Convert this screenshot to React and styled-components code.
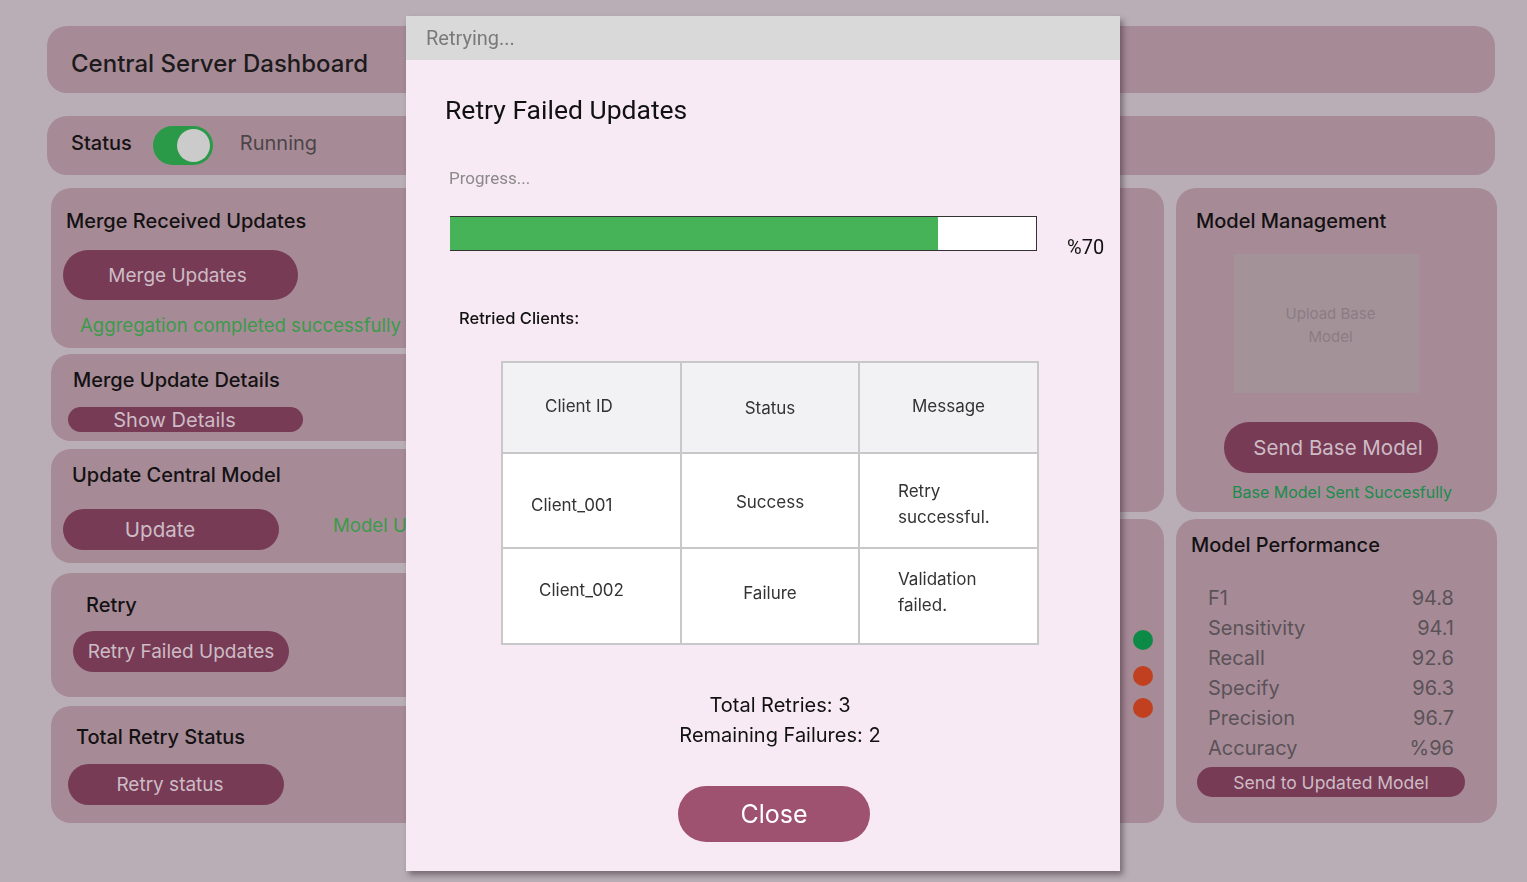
import React from "react";
import styled, { createGlobalStyle } from "styled-components";

const GlobalStyle = createGlobalStyle`
  html, body {
    margin: 0;
    padding: 0;
    background: #b9aeb6;
    font-family: Inter, "Noto Sans", sans-serif;
  }
`;

const Page = styled.div`
  width: 1527px;
  height: 882px;
  box-sizing: border-box;
  padding: 26px 32px 0 47px;
  display: flex;
  flex-direction: column;
  overflow: hidden;
`;

const TopBar = styled.div`
  height: ${(p) => p.h}px;
  margin-bottom: ${(p) => p.mb}px;
  box-sizing: border-box;
  padding: ${(p) => p.pad || "0"};
  padding-left: 24px;
  background: #a68b97;
  border-radius: 20px;
  display: flex;
  align-items: center;
  gap: 21px;
`;

const PageTitle = styled.h1`
  margin: 0;
  font-size: 24px;
  font-weight: 500;
  color: #1d1a1c;
`;

const Label = styled.span`
  font-size: 20px;
  font-weight: 500;
  color: #161315;
`;

const Toggle = styled.div`
  width: 60px;
  height: 39px;
  border-radius: 20px;
  background: #2b9a48;
  position: relative;
  &::after {
    content: "";
    position: absolute;
    right: 3px;
    top: 3px;
    width: 33px;
    height: 33px;
    border-radius: 50%;
    background: #cbcbcb;
  }
`;

const StatusText = styled.span`
  font-size: 20px;
  color: #4c4449;
  margin-left: 6px;
`;

const Columns = styled.div`
  display: grid;
  grid-template-columns: 470px 631px 321px;
  column-gap: 12px;
  margin-left: 4px;
`;

const Column = styled.div`
  display: flex;
  flex-direction: column;
  gap: ${(p) => p.gap || 0}px;
`;

const Card = styled.div`
  height: ${(p) => p.h}px;
  margin-top: ${(p) => p.mt || 0}px;
  box-sizing: border-box;
  background: #a68b97;
  border-radius: 20px;
  padding: ${(p) => p.pad || "20px 12px"};
  display: flex;
  flex-direction: column;
  position: relative;
  flex-shrink: 0;
`;

const CardTitle = styled.div`
  font-size: 20px;
  font-weight: 450;
  color: #141113;
  padding-left: ${(p) => p.indent || 0}px;
  margin-bottom: ${(p) => p.mb || 0}px;
`;

const PillButton = styled.button`
  width: ${(p) => p.w}px;
  height: ${(p) => p.h}px;
  margin-left: ${(p) => p.ml || 0}px;
  margin-top: ${(p) => p.mt || 0}px;
  border: none;
  border-radius: 25px;
  background: #773b55;
  color: #cdbcc5;
  font-family: Inter, sans-serif;
  font-size: ${(p) => p.fs || 19}px;
  padding: 0;
  padding-left: ${(p) => (p.shift > 0 ? p.shift * 2 : 0)}px;
  padding-right: ${(p) => (p.shift < 0 ? -p.shift * 2 : 0)}px;
  display: flex;
  align-items: center;
  justify-content: center;
  flex-shrink: 0;
`;

const Success = styled.div`
  color: ${(p) => p.color || "#3c9a4b"};
  font-size: ${(p) => p.fs || 18.6}px;
  padding-left: ${(p) => p.indent || 0}px;
  margin-top: ${(p) => p.mt || 0}px;
  white-space: nowrap;
`;

const Row = styled.div`
  display: flex;
  align-items: center;
  gap: 54px;
`;

const Dots = styled.div`
  position: absolute;
  right: 11px;
  top: 111px;
  display: flex;
  flex-direction: column;
`;

const Dot = styled.div`
  width: 20px;
  height: 20px;
  margin-top: ${(p) => p.mt || 0}px;
  border-radius: 50%;
  background: ${(p) => p.color};
`;

const UploadBox = styled.div`
  width: 185px;
  height: 139px;
  margin: 21px 0 0 38px;
  background: #a39399;
  color: #8b7c83;
  font-size: 15px;
  line-height: 23px;
  text-align: center;
  display: flex;
  align-items: center;
  justify-content: center;
  padding: 2px 0 0 8px;
  box-sizing: border-box;
`;

const MetricList = styled.div`
  display: flex;
  flex-direction: column;
  margin-top: 26px;
  padding: 0 22px 0 17px;
`;

const Metric = styled.div`
  display: flex;
  justify-content: space-between;
  font-size: 20px;
  line-height: 30px;
  color: #5b5257;
`;

/* modal */

const Modal = styled.div`
  position: fixed;
  top: 16px;
  left: 406px;
  width: 714px;
  height: 855px;
  background: #f8eaf4;
  box-shadow: 3px 4px 6px rgba(40, 20, 30, 0.45);
  display: flex;
  flex-direction: column;
`;

const ModalHeader = styled.div`
  height: 44px;
  background: #d9d9d9;
  color: #7a7a7a;
  font-family: Roboto, sans-serif;
  font-size: 20px;
  display: flex;
  align-items: center;
  padding-left: 20px;
  flex-shrink: 0;
`;

const ModalBody = styled.div`
  padding: 34px 0 0 39px;
  display: flex;
  flex-direction: column;
`;

const ModalTitle = styled.h2`
  margin: 0;
  font-family: Roboto, sans-serif;
  font-weight: 400;
  font-size: 26.5px;
  color: #111;
`;

const ProgressLabel = styled.div`
  font-family: Roboto, sans-serif;
  color: #8a8a8a;
  font-size: 17px;
  margin: 43px 0 0 4px;
`;

const ProgressRow = styled.div`
  display: flex;
  align-items: flex-start;
  margin: 28px 0 0 5px;
`;

const Track = styled.div`
  width: 587px;
  height: 35px;
  box-sizing: border-box;
  border: 1px solid #333;
  border-left: none;
  background: #fff;
  display: flex;
`;

const Fill = styled.div`
  height: 100%;
  background: #46b358;
`;

const Percent = styled.span`
  font-family: Roboto, sans-serif;
  font-size: 20px;
  line-height: 24px;
  color: #111;
  margin: 19px 0 0 30px;
`;

const SubHeading = styled.div`
  font-size: 16.5px;
  font-weight: 500;
  color: #111;
  margin: 49px 0 0 14px;
`;

const Table = styled.div`
  display: grid;
  grid-template-columns: 179px 178px 179px;
  grid-template-rows: 91px 95px 96px;
  width: 536px;
  margin: 33px 0 0 56px;
  border: 1px solid #c8c8c8;
`;

const Cell = styled.div`
  border: 1px solid #c8c8c8;
  background: ${(p) => (p.head ? "#f2f2f4" : "#fff")};
  color: #333;
  font-size: 17px;
  line-height: 26px;
  display: flex;
  align-items: center;
  justify-content: ${(p) => (p.left ? "flex-start" : "center")};
  padding: ${(p) => p.pad || "0"};
  box-sizing: border-box;
`;

const Totals = styled.div`
  text-align: center;
  font-size: 20px;
  line-height: 30px;
  color: #111;
  margin: 45px 0 0 -22px;
  width: 714px;
`;

const CloseButton = styled.button`
  width: 192px;
  height: 56px;
  border: none;
  border-radius: 28px;
  background: #9e526f;
  color: #fff;
  font-family: Inter, sans-serif;
  font-size: 25px;
  margin: 36px 0 0 233px;
`;

const metrics = [
  ["F1", "94.8"],
  ["Sensitivity", "94.1"],
  ["Recall", "92.6"],
  ["Specify", "96.3"],
  ["Precision", "96.7"],
  ["Accuracy", "%96"],
];

const App = () => {
  const progress = 70;
  return (
    <>
      <GlobalStyle />
      <Page>
        <TopBar h={67} mb={23} pad="8px 0 0">
          <PageTitle>Central Server Dashboard</PageTitle>
        </TopBar>
        <TopBar h={59} mb={13} pad="0 0 5px">
          <Label>Status</Label>
          <Toggle style={{ marginTop: 5 }} />
          <StatusText>Running</StatusText>
        </TopBar>

        <Columns>
          <Column>
            <Card h={160} pad="21px 12px 0 12px">
              <CardTitle indent={3} mb={17}>Merge Received Updates</CardTitle>
              <PillButton w={235} h={50} shift={-3}>Merge Updates</PillButton>
              <Success indent={17} mt={14}>Aggregation completed successfully</Success>
            </Card>
            <Card h={87} mt={6} pad="14px 17px 0">
              <CardTitle indent={5} mb={15}>Merge Update Details</CardTitle>
              <PillButton w={235} h={25} fs={20} shift={-11}>Show Details</PillButton>
            </Card>
            <Card h={114} mt={8} pad="14px 12px 0">
              <CardTitle indent={9} mb={22}>Update Central Model</CardTitle>
              <Row>
                <PillButton w={216} h={41} fs={20.5} shift={-11}>Update</PillButton>
                <Success mt={-10}>Model Updated Successfully</Success>
              </Row>
            </Card>
            <Card h={124} mt={10} pad="20px 12px 0">
              <CardTitle indent={23} mb={14}>Retry</CardTitle>
              <PillButton w={216} h={41} ml={10}>Retry Failed Updates</PillButton>
            </Card>
            <Card h={117} mt={9} pad="19px 17px 0">
              <CardTitle indent={8} mb={15}>Total Retry Status</CardTitle>
              <PillButton w={216} h={41} shift={-6}>Retry status</PillButton>
            </Card>
          </Column>

          <Column gap={7}>
            <Card h={324} />
            <Card h={304}>
              <Dots>
                <Dot color="#0e8a47" />
                <Dot color="#c0401f" mt={16} />
                <Dot color="#c0401f" mt={12} />
              </Dots>
            </Card>
          </Column>

          <Column gap={7}>
            <Card h={324} pad="21px 20px 0">
              <CardTitle>Model Management</CardTitle>
              <UploadBox>
                Upload Base
                <br />
                Model
              </UploadBox>
              <PillButton w={214} h={51} fs={20.5} ml={28} mt={29} shift={7}>
                Send Base Model
              </PillButton>
              <Success fs={16} color="#1a8c4c" indent={36} mt={9}>
                Base Model Sent Succesfully
              </Success>
            </Card>
            <Card h={304} pad="14px 21px 0 15px">
              <CardTitle>Model Performance</CardTitle>
              <MetricList>
                {metrics.map(([k, v]) => (
                  <Metric key={k}>
                    <span>{k}</span>
                    <span>{v}</span>
                  </Metric>
                ))}
              </MetricList>
              <PillButton w={268} h={30} fs={17.5} ml={6} mt={4}>
                Send to Updated Model
              </PillButton>
            </Card>
          </Column>
        </Columns>
      </Page>

      <Modal>
        <ModalHeader>Retrying...</ModalHeader>
        <ModalBody>
          <ModalTitle>Retry Failed Updates</ModalTitle>
          <ProgressLabel>Progress...</ProgressLabel>
          <ProgressRow>
            <Track>
              <Fill style={{ width: `${(progress / 70) * 83.3}%` }} />
            </Track>
            <Percent>%{progress}</Percent>
          </ProgressRow>
          <SubHeading>Retried Clients:</SubHeading>
          <Table>
            <Cell head left pad="0 0 4px 42px">Client ID</Cell>
            <Cell head pad="0 0 0">Status</Cell>
            <Cell head pad="0 0 4px">Message</Cell>
            <Cell left pad="8px 0 0 28px">Client_001</Cell>
            <Cell pad="2px 0 0">Success</Cell>
            <Cell left pad="6px 20px 0 38px">Retry successful.</Cell>
            <Cell left pad="0 0 12px 36px">Client_002</Cell>
            <Cell pad="0 0 6px">Failure</Cell>
            <Cell left pad="0 20px 8px 38px">Validation failed.</Cell>
          </Table>
          <Totals>
            Total Retries: 3
            <br />
            Remaining Failures: 2
          </Totals>
          <CloseButton>Close</CloseButton>
        </ModalBody>
      </Modal>
    </>
  );
};

export default App;
